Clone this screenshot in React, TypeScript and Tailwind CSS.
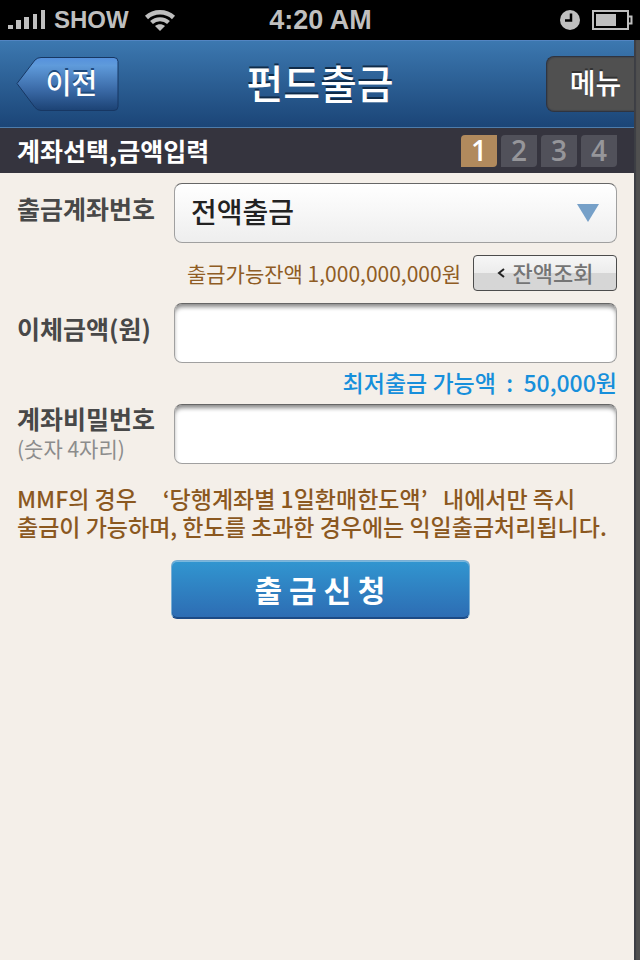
import React, { useState } from "react";

const steps = [1, 2, 3, 4];

function StatusBar() {
  return (
    <div className="grid h-10 grid-cols-[1fr_auto_1fr] items-center bg-black pr-[7px] pb-0.5 pl-2 font-['Liberation_Sans',sans-serif] font-bold text-[#bfbfbf]">
      <div className="flex items-center">
        <svg width="38" height="20" viewBox="0 0 38 20" fill="currentColor" aria-hidden="true">
          <rect x="0" y="15" width="5" height="4" />
          <rect x="8" y="10" width="5" height="9" />
          <rect x="16" y="7" width="5" height="12" />
          <rect x="25" y="4" width="4" height="15" />
          <rect x="33" y="0" width="4" height="19" />
        </svg>
        <span className="ml-2 text-2xl">SHOW</span>
        <svg className="ml-[15px]" width="32" height="22" viewBox="0 0 32 22" aria-hidden="true">
          <path d="M2.5 8.5C10 1.5 22 1.5 29.500 8.500" fill="none" stroke="currentColor" strokeWidth="4.500" />
          <path d="M7.500 13.500C12 9 20 9 24.500 13.500" fill="none" stroke="currentColor" strokeWidth="4" />
          <path d="M11 17C14 14.500 18 14.500 21 17L16 22Z" fill="currentColor" />
        </svg>
      </div>
      <time className="text-[27px]">4:20 AM</time>
      <div className="flex items-center justify-end gap-3">
        <svg width="20" height="20" viewBox="0 0 20 20" aria-hidden="true">
          <circle cx="10" cy="10" r="10" fill="currentColor" />
          <path d="M11 3.500V10.500H5" fill="none" stroke="#000" strokeWidth="2.500" />
        </svg>
        <svg width="41" height="20" viewBox="0 0 41 20" aria-hidden="true">
          <rect x="1" y="1" width="35" height="18" fill="none" stroke="currentColor" strokeWidth="2" />
          <rect x="4" y="4" width="20" height="12" fill="currentColor" />
          <path d="M37 6.500H39.500V13.500H37" fill="none" stroke="currentColor" strokeWidth="2" />
        </svg>
      </div>
    </div>
  );
}

function Header() {
  return (
    <header className="h-22 border-t border-b border-t-[#5385c2] border-b-[#4d7cab] bg-linear-to-b from-[#3c78b0] to-[#1b4577]">
      <div className="-mr-1.5 grid h-full grid-cols-[1fr_auto_1fr] items-center text-white">
        <button type="button" className="relative ml-4 h-14 w-[103px] pb-1 pl-2 text-[28px] leading-none font-medium">
          <svg className="absolute inset-0" width="103" height="56" viewBox="0 0 103 56" aria-hidden="true">
            <defs>
              <linearGradient id="back-fill" x1="0" y1="0" x2="0" y2="1">
                <stop offset="0" stopColor="#5590dd" />
                <stop offset="0.15" stopColor="#5f9bdb" />
                <stop offset="0.6" stopColor="#3b6ba8" />
                <stop offset="1" stopColor="#1c4274" />
              </linearGradient>
            </defs>
            <path
              d="M1 27.500L19 4Q21.500 1.500 25 1.500H98Q102 1.500 102 5.500V50.500Q102 54.500 98 54.500H25Q21.500 54.500 19 51.500Z"
              fill="url(#back-fill)"
              stroke="#173763"
              strokeWidth="1"
            />
          </svg>
          <span className="relative [text-shadow:0_-2px_0_#1f4a7c]">이전</span>
        </button>
        <h1 className="pb-1 text-[40px] leading-none font-medium [text-shadow:0_-2px_0_#102c4a]">펀드출금</h1>
        <button
          type="button"
          className="h-14 w-[94px] justify-self-end rounded-l-lg border-y border-l border-[#2f3440] bg-[#505050] pb-1 pl-1 text-[28px] leading-none font-medium shadow-[inset_1px_1px_1px_#43464c,inset_0_-1px_1px_#43464c] [text-shadow:0_-2px_0_#333]"
        >
          메뉴
        </button>
      </div>
    </header>
  );
}

function StepBar() {
  return (
    <div className="flex h-[45px] items-center justify-between bg-[#35343e] px-[17px]">
      <h2 className="text-[25px] leading-none font-bold text-white">계좌선택,금액입력</h2>
      <ol className="flex gap-1 font-['Open_Sans',sans-serif] text-[28px] leading-[30px] font-semibold">
        {steps.map((n) => (
          <li
            key={n}
            className={
              n === 1
                ? "h-8 w-9 rounded-tl rounded-br bg-[#b18a5d] text-center text-white"
                : "h-8 w-9 rounded-tl rounded-br bg-[#51515a] text-center text-[#96969a]"
            }
          >
            {n}
          </li>
        ))}
      </ol>
    </div>
  );
}

const fieldBox =
  "block h-15 w-full rounded-lg border border-[#a0a0a0] border-t-[#666] bg-white px-4 text-[28px] text-[#222] shadow-[inset_0_4px_4px_-1px_#8a8a8a] outline-none";
const labelText = "text-[25px] leading-7 font-bold text-[#484848]";

export default function App() {
  const [amount, setAmount] = useState("");
  const [pin, setPin] = useState("");

  return (
    <div className="flex min-h-screen flex-col bg-[#f4efe9] font-['Noto_Sans_CJK_KR',sans-serif]">
      <StatusBar />
      <div className="flex flex-1">
        <div className="min-w-0 flex-1">
          <Header />
          <StepBar />
          <form className="px-[17px] pt-2.5" onSubmit={(e) => e.preventDefault()}>
            <div className="grid grid-cols-[157px_1fr]">
              <label htmlFor="account" className={`${labelText} pt-[11px]`}>
                출금계좌번호
              </label>
              <div className="grid items-center">
                <select
                  id="account"
                  className="col-start-1 row-start-1 h-15 w-full appearance-none rounded-lg border border-[#a0a0a0] border-t-[#666] bg-linear-to-b from-white to-[#eeeeee] pr-14 pb-1 pl-4 text-[28px] font-medium text-[#222]"
                >
                  <option>전액출금</option>
                </select>
                <svg
                  className="pointer-events-none col-start-1 row-start-1 mr-[18px] justify-self-end"
                  width="22"
                  height="18"
                  viewBox="0 0 22 18"
                  aria-hidden="true"
                >
                  <path d="M0 0H22L11 18Z" fill="#76a0c8" />
                </svg>
              </div>
            </div>

            <div className="flex h-15 items-center justify-end gap-3">
              <p className="text-[21px] leading-none text-[#8f5c24]">출금가능잔액 1,000,000,000원</p>
              <button
                type="button"
                className="flex h-9 w-36 items-center justify-center gap-2 rounded border border-[#4c4c4c] bg-linear-to-b from-[#f6f6f6] from-0% via-[#ececec] via-50% to-[#d6d6d6] to-50% text-[22px] leading-none font-medium text-[#757575]"
              >
                <svg width="8" height="10" viewBox="0 0 8 10" aria-hidden="true">
                  <path d="M7 1L2 5L7 9" fill="none" stroke="#222" strokeWidth="2" />
                </svg>
                <span className="pb-0.5">잔액조회</span>
              </button>
            </div>

            <div className="grid grid-cols-[157px_1fr]">
              <label htmlFor="amount" className={`${labelText} pt-[11px]`}>
                이체금액(원)
              </label>
              <input
                id="amount"
                inputMode="numeric"
                value={amount}
                onChange={(e) => setAmount(e.target.value)}
                className={fieldBox}
              />
            </div>

            <p className="h-[41px] text-right text-[23px] leading-[38px] font-medium text-[#178fdb]">
              최저출금 가능액&nbsp; :&nbsp; 50,000원
            </p>

            <div className="grid grid-cols-[157px_1fr]">
              <label htmlFor="pin" className={labelText}>
                <span className="block">계좌비밀번호</span>
                <span className="block pt-0.5 text-[21px] font-normal text-[#8c8c8c]">(숫자 4자리)</span>
              </label>
              <input
                id="pin"
                type="password"
                maxLength={4}
                value={pin}
                onChange={(e) => setPin(e.target.value)}
                className={fieldBox}
              />
            </div>

            <p className="-mr-4 pt-5 text-[23px] leading-7 font-medium text-[#8b581f]">
              MMF의 경우&nbsp;&nbsp;&nbsp;&nbsp; ‘당행계좌별 1일환매한도액’&nbsp;&nbsp; 내에서만 즉시
              <br />
              출금이 가능하며, 한도를 초과한 경우에는 익일출금처리됩니다.
            </p>

            <div className="-mr-1.5 flex justify-center pt-5">
              <button
                type="submit"
                className="h-[59px] w-[299px] rounded-md border border-[#79aed4] border-b-[#1c4a85] bg-linear-to-b from-[#3196d0] to-[#2d6cb3] pb-0.5 text-[30px] leading-none font-bold text-white shadow-[inset_0_-1px_0_#1c4a85,inset_0_1px_0_#79b8de]"
              >
                출 금 신 청
              </button>
            </div>
          </form>
        </div>
        <div className="w-1.5 bg-[#505050] shadow-[inset_2px_0_1px_#3c3e44]" aria-hidden="true" />
      </div>
    </div>
  );
}
